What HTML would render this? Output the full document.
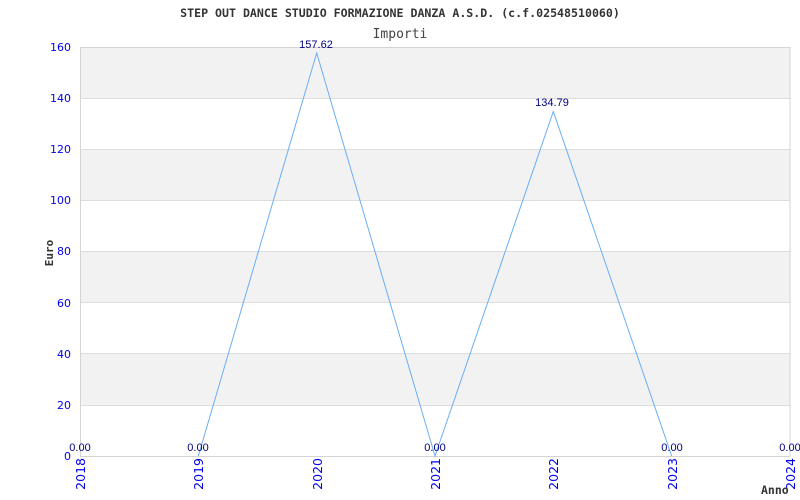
<!DOCTYPE html>
<html><head><meta charset="utf-8"><style>
html,body{margin:0;padding:0;background:#fff;width:800px;height:500px;overflow:hidden}
svg{display:block}
.ax{font-family:"DejaVu Sans","Liberation Sans",sans-serif;font-size:11px;fill:#0000ee}
.yr{font-family:"DejaVu Sans","Liberation Sans",sans-serif;font-size:12.5px;fill:#0000ee}
.lb{font-family:"Liberation Sans",sans-serif;font-size:11px;fill:#000080}
</style></head><body>
<svg width="800" height="500" viewBox="0 0 800 500" xmlns="http://www.w3.org/2000/svg">
<rect width="800" height="500" fill="#fff"/>
<text x="400" y="17" text-anchor="middle" font-family="DejaVu Sans Mono,Liberation Mono,monospace" font-weight="bold" font-size="11.6" fill="#333">STEP OUT DANCE STUDIO FORMAZIONE DANZA A.S.D. (c.f.02548510060)</text>
<text x="400" y="38" text-anchor="middle" font-family="DejaVu Sans Mono,Liberation Mono,monospace" font-size="13" fill="#444">Importi</text>
<g fill="#f2f2f2">
<rect x="80" y="47" width="710" height="51.1"/>
<rect x="80" y="149.2" width="710" height="51.1"/>
<rect x="80" y="251.5" width="710" height="51.1"/>
<rect x="80" y="353.7" width="710" height="51.1"/>
</g>
<g stroke="#dddddd" stroke-width="1">
<line x1="80" y1="98.5" x2="790" y2="98.5"/>
<line x1="80" y1="149.5" x2="790" y2="149.5"/>
<line x1="80" y1="200.5" x2="790" y2="200.5"/>
<line x1="80" y1="251.5" x2="790" y2="251.5"/>
<line x1="80" y1="302.5" x2="790" y2="302.5"/>
<line x1="80" y1="353.5" x2="790" y2="353.5"/>
<line x1="80" y1="405.5" x2="790" y2="405.5"/>
</g>
<rect x="80.5" y="47.5" width="709.5" height="409" fill="none" stroke="#d4d4d4"/>
<g class="ax" text-anchor="end">
<text x="71" y="51">160</text><text x="71" y="102">140</text><text x="71" y="153">120</text>
<text x="71" y="204">100</text><text x="71" y="255">80</text><text x="71" y="307">60</text>
<text x="71" y="358">40</text><text x="71" y="409">20</text><text x="71" y="460">0</text>
</g>
<text transform="translate(53,253) rotate(-90)" text-anchor="middle" font-family="DejaVu Sans Mono,monospace" font-weight="bold" font-size="11" fill="#333">Euro</text>
<g class="yr" text-anchor="end">
<text transform="translate(85,458) rotate(-90)">2018</text>
<text transform="translate(203,458) rotate(-90)">2019</text>
<text transform="translate(322,458) rotate(-90)">2020</text>
<text transform="translate(440,458) rotate(-90)">2021</text>
<text transform="translate(558,458) rotate(-90)">2022</text>
<text transform="translate(677,458) rotate(-90)">2023</text>
<text transform="translate(795,458) rotate(-90)">2024</text>
</g>
<text x="761" y="494" font-family="DejaVu Sans Mono,monospace" font-weight="bold" font-size="11.5" fill="#333">Anno</text>
<polyline points="198.3,456 316.7,53 435,456 553.3,111.5 671.7,456" fill="none" stroke="#6aaef5" stroke-width="1"/>
<g class="lb" text-anchor="middle">
<text x="80" y="451">0.00</text><text x="198" y="451">0.00</text>
<text x="316" y="48">157.62</text><text x="435" y="451">0.00</text>
<text x="552" y="106">134.79</text><text x="672" y="451">0.00</text>
<text x="790" y="451">0.00</text>
</g>
</svg>
</body></html>
